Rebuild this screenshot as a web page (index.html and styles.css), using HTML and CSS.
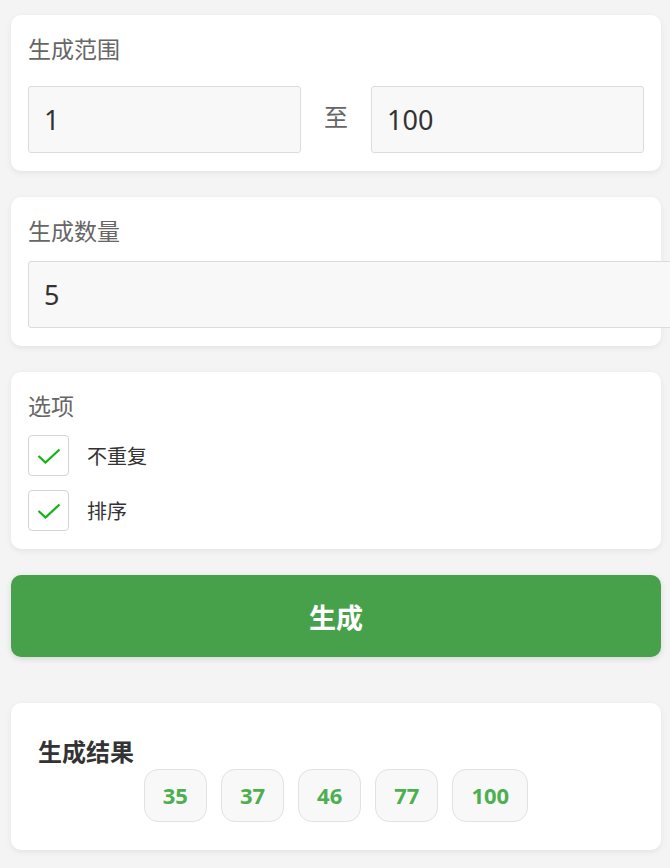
FILE: index.html
```html
<!DOCTYPE html>
<html lang="zh-CN">
<head>
    <meta charset="UTF-8">
    <meta name="viewport" content="width=device-width, initial-scale=1.0">
    <title>随机数生成</title>
    <link rel="stylesheet" href="styles.css">
</head>
<body>
    <div class="page">
        <div class="card">
            <div class="card-label">生成范围</div>
            <div class="range-row">
                <input class="field range-field" type="text" value="1">
                <span class="range-sep">至</span>
                <input class="field range-field" type="text" value="100">
            </div>
        </div>

        <div class="card">
            <div class="card-label label-tight">生成数量</div>
            <input class="field count-field" type="text" value="5">
        </div>

        <div class="card">
            <div class="card-label label-options">选项</div>
            <div class="option">
                <span class="checkbox">
                    <svg width="24" height="16" viewBox="0 0 24 16"><polyline points="1.5,8 8.5,14.5 22.5,1.5" fill="none" stroke="#12b312" stroke-width="2.2"/></svg>
                </span>
                <span class="option-text">不重复</span>
            </div>
            <div class="option">
                <span class="checkbox">
                    <svg width="24" height="16" viewBox="0 0 24 16"><polyline points="1.5,8 8.5,14.5 22.5,1.5" fill="none" stroke="#12b312" stroke-width="2.2"/></svg>
                </span>
                <span class="option-text">排序</span>
            </div>
        </div>

        <button class="generate-btn">生成</button>

        <div class="card result-card">
            <div class="result-title">生成结果</div>
            <div class="result-list">
                <span class="result-tag">35</span>
                <span class="result-tag">37</span>
                <span class="result-tag">46</span>
                <span class="result-tag">77</span>
                <span class="result-tag">100</span>
            </div>
        </div>
    </div>
</body>
</html>
```

FILE: styles.css
```css
html, body {
    margin: 0;
    padding: 0;
    background-color: #f4f4f4;
    overflow: hidden;
}
body {
    font-family: 'Noto Sans', 'Noto Sans CJK SC', sans-serif;
    color: #333;
}
.page {
    padding: 15px 9px 0 11px;
}
.card {
    background: #fff;
    border-radius: 10px;
    padding: 18px 17px;
    margin-bottom: 26px;
    box-shadow: 0 2px 6px rgba(0,0,0,0.07);
}
.card-label {
    font-size: 23px;
    line-height: 32px;
    color: #666;
    margin-bottom: 21px;
}
.label-tight {
    margin-bottom: 14px;
}
.label-options {
    margin-bottom: 13px;
}
.range-row {
    display: flex;
    align-items: center;
}
.field {
    height: 65px;
    padding: 0 15px;
    font-family: 'Noto Sans', 'Noto Sans CJK SC', sans-serif;
    font-size: 27px;
    color: #333;
    background-color: #f8f8f8;
    border: 1px solid #dcdcdc;
    border-radius: 3px;
    outline: none;
}
.range-field {
    flex: 1;
    min-width: 0;
    box-sizing: border-box;
    height: 67px;
}
.range-sep {
    margin: 0 23px;
    font-size: 24px;
    color: #666;
    line-height: 32px;
    position: relative;
    top: -3px;
}
.count-field {
    display: block;
    width: 100%;
}
.option {
    display: flex;
    align-items: center;
    margin-bottom: 14px;
}
.option:last-child {
    margin-bottom: 0;
}
.checkbox {
    width: 39px;
    height: 39px;
    border: 1.5px solid #d4d4d4;
    border-radius: 4px;
    background: #fff;
    display: flex;
    align-items: center;
    justify-content: center;
}
.option-text {
    margin-left: 18px;
    font-size: 20px;
    color: #333;
}
.generate-btn {
    display: block;
    width: 100%;
    height: 82px;
    margin: 0 0 46px;
    border: none;
    border-radius: 10px;
    background-color: #47a14a;
    color: #fff;
    font-family: 'Noto Sans', 'Noto Sans CJK SC', sans-serif;
    font-size: 27px;
    font-weight: bold;
    box-shadow: 0 2px 6px rgba(0,0,0,0.12);
    cursor: pointer;
}
.result-card {
    padding-top: 32px;
    padding-bottom: 28px;
}
.result-title {
    margin-left: 10px;
    font-size: 24px;
    line-height: 34px;
    font-weight: bold;
    color: #333;
}
.result-list {
    display: flex;
    flex-wrap: wrap;
    justify-content: center;
    gap: 14px;
}
.result-tag {
    height: 51px;
    line-height: 51px;
    padding: 0 18px;
    background-color: #f8f8f8;
    border: 1px solid #e2e2e2;
    border-radius: 14px;
    color: #4caf50;
    font-size: 22px;
    font-weight: bold;
}
```
